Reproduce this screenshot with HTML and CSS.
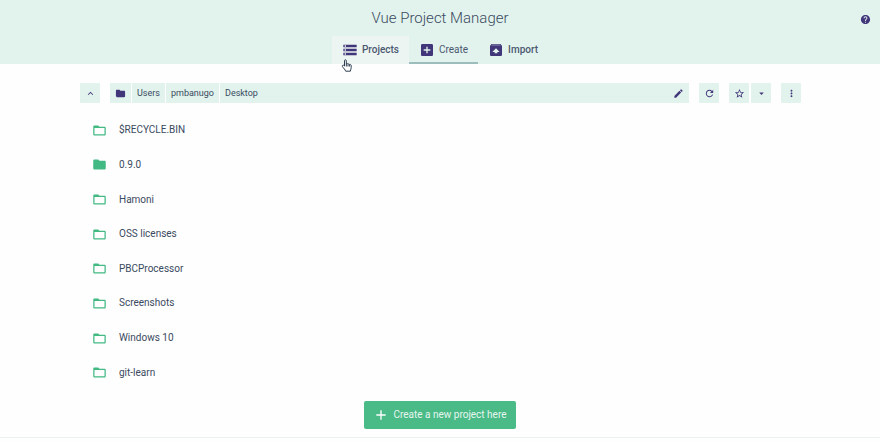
FILE: index.html
```html
<!DOCTYPE html>
<html lang="en">
<head>
<meta charset="utf-8">
<title>Vue Project Manager</title>
<link rel="stylesheet" href="styles.css">
</head>
<body>
<svg class="sprite" aria-hidden="true">
  <symbol id="folder" viewBox="0 0 24 24"><path d="M10 4H4c-1.1 0-1.99.9-1.99 2L2 18c0 1.1.9 2 2 2h16c1.1 0 2-.9 2-2V8c0-1.1-.9-2-2-2h-8l-2-2z"/></symbol>
  <symbol id="folder-open" viewBox="0 0 24 24"><path d="M20 6h-8l-2-2H4c-1.1 0-1.99.9-1.99 2L2 18c0 1.1.9 2 2 2h16c1.1 0 2-.9 2-2V8c0-1.1-.9-2-2-2zm0 12H4V8h16v10z"/></symbol>
</svg>
<header class="header">
  <h1 class="title">Vue Project Manager</h1>
  <button class="help" aria-label="Help"><svg class="icon small" viewBox="0 0 24 24"><path d="M12 2C6.480 2 2 6.480 2 12s4.480 10 10 10 10-4.480 10-10S17.520 2 12 2zm1 17h-2v-2h2v2zm2.070-7.750l-.9.920C13.450 12.900 13 13.500 13 15h-2v-.5c0-1.100.450-2.100 1.170-2.830l1.240-1.260c.370-.360.590-.860.590-1.410 0-1.100-.9-2-2-2s-2 .9-2 2H8c0-2.210 1.790-4 4-4s4 1.790 4 4c0 .880-.360 1.680-.930 2.250z"/></svg></button>
  <nav class="tabs">
    <a class="tab hovered" href="#projects"><svg class="icon" viewBox="0 0 24 24"><path d="M2 20h20v-4H2v4zm2-3h2v2H4v-2zM2 4v4h20V4H2zm4 3H4V5h2v2zm-4 7h20v-4H2v4zm2-3h2v2H4v-2z"/></svg>Projects</a>
    <a class="tab active" href="#create"><svg class="icon" viewBox="0 0 24 24"><path d="M19 3H5c-1.110 0-2 .9-2 2v14c0 1.100.890 2 2 2h14c1.100 0 2-.9 2-2V5c0-1.100-.9-2-2-2zm-2 10h-4v4h-2v-4H7v-2h4V7h2v4h4v2z"/></svg>Create</a>
    <a class="tab" href="#import"><svg class="icon" viewBox="0 0 24 24"><path d="M20.550 5.220l-1.390-1.680C18.880 3.210 18.470 3 18 3H6c-.470 0-.880.210-1.150.550L3.460 5.220C3.170 5.570 3 6.010 3 6.500V19c0 1.100.890 2 2 2h14c1.100 0 2-.9 2-2V6.500c0-.490-.170-.930-.450-1.280zM12 9.500l5.500 5.500H14v2h-4v-2H6.500L12 9.500zM5.120 5l.820-1h12l.930 1H5.120z"/></svg>Import</a>
    <svg class="pointer" viewBox="0 0 12 13" aria-hidden="true"><path d="M3.500 7V1.700c0-1.300 1.800-1.300 1.800 0V5c.4-.7 1.500-.6 1.700.2.500-.5 1.400-.3 1.600.4.700-.4 1.600 0 1.600.9v2.200c0 1.200-.7 1.900-.9 3.500H4.700C4.300 10.700 2.500 9.300 1.400 7.500.9 6.500 2 5.700 2.700 6.300zM5.300 5v2.500M7 5.300v2.200M8.600 5.700v1.800"/></svg>
  </nav>
</header>
<main class="content">
  <div class="toolbar">
    <button class="tool" aria-label="Open parent folder"><svg class="icon small" viewBox="0 0 24 24"><path d="M7.410 15.410L12 10.830l4.590 4.580L18 14l-6-6-6 6z"/></svg></button>
    <div class="path">
      <button class="crumb" aria-label="Root folder"><svg class="icon small"><use href="#folder"/></svg></button>
      <button class="crumb">Users</button>
      <button class="crumb">pmbanugo</button>
      <button class="crumb last">Desktop</button>
      <button class="crumb edit" aria-label="Edit path"><svg class="icon small" viewBox="0 0 24 24"><path d="M3 17.250V21h3.750L17.810 9.940l-3.750-3.750L3 17.250zM20.710 7.040c.390-.390.390-1.020 0-1.410l-2.340-2.340c-.390-.390-1.020-.390-1.410 0l-1.830 1.830 3.750 3.750 1.830-1.830z"/></svg></button>
    </div>
    <button class="tool" aria-label="Refresh"><svg class="icon small" viewBox="0 0 24 24"><path d="M17.650 6.350C16.200 4.900 14.210 4 12 4c-4.420 0-7.990 3.580-7.990 8s3.570 8 7.990 8c3.730 0 6.840-2.550 7.730-6h-2.080c-.820 2.330-3.040 4-5.650 4-3.310 0-6-2.690-6-6s2.690-6 6-6c1.660 0 3.140.690 4.220 1.780L13 11h7V4l-2.350 2.350z"/></svg></button>
    <div class="favorites">
      <button class="tool" aria-label="Toggle favorite"><svg class="icon small" viewBox="0 0 24 24"><path d="M22 9.240l-7.190-.620L12 2 9.190 8.630 2 9.240l5.460 4.730L5.820 21 12 17.270 18.180 21l-1.630-7.030L22 9.240zM12 15.400l-3.760 2.270 1-4.280-3.320-2.880 4.380-.380L12 6.100l1.710 4.040 4.380.380-3.320 2.880 1 4.280L12 15.400z"/></svg></button>
      <button class="tool" aria-label="Favorite folders"><svg class="icon small" viewBox="0 0 24 24"><path d="M7 10l5 5 5-5z"/></svg></button>
    </div>
    <button class="tool" aria-label="More options"><svg class="icon small" viewBox="0 0 24 24"><path d="M12 8c1.100 0 2-.9 2-2s-.9-2-2-2-2 .9-2 2 .9 2 2 2zm0 2c-1.100 0-2 .9-2 2s.9 2 2 2 2-.9 2-2-.9-2-2-2zm0 6c-1.100 0-2 .9-2 2s.9 2 2 2 2-.9 2-2-.9-2-2-2z"/></svg></button>
  </div>
  <ul class="folders">
    <li class="folder"><svg class="icon"><use href="#folder-open"/></svg>$RECYCLE.BIN</li>
    <li class="folder"><svg class="icon"><use href="#folder"/></svg>0.9.0</li>
    <li class="folder"><svg class="icon"><use href="#folder-open"/></svg>Hamoni</li>
    <li class="folder"><svg class="icon"><use href="#folder-open"/></svg>OSS licenses</li>
    <li class="folder"><svg class="icon"><use href="#folder-open"/></svg>PBCProcessor</li>
    <li class="folder"><svg class="icon"><use href="#folder-open"/></svg>Screenshots</li>
    <li class="folder"><svg class="icon"><use href="#folder-open"/></svg>Windows 10</li>
    <li class="folder"><svg class="icon"><use href="#folder-open"/></svg>git-learn</li>
  </ul>
</main>
<div class="actions">
  <button class="create"><svg class="icon" viewBox="0 0 24 24"><path d="M19 13h-6v6h-2v-6H5v-2h6V5h2v6h6v2z"/></svg>Create a new project here</button>
</div>
<footer class="status"></footer>
</body>
</html>
```
FILE: styles.css
```css
* {
  box-sizing: border-box;
}

body {
  margin: 0;
  min-height: 100vh;
  display: flex;
  flex-direction: column;
  background: #fefefe;
  color: #3a4a60;
  font: 10px/16px Roboto, sans-serif;
}

button {
  margin: 0;
  padding: 0;
  border: 0;
  background: none;
  color: inherit;
  font: inherit;
  cursor: pointer;
}

.sprite {
  position: absolute;
  width: 0;
  height: 0;
}

.icon {
  flex: none;
  width: 16px;
  height: 16px;
  fill: #42367a;
}

.small {
  width: 11px;
  height: 11px;
}

.header {
  position: relative;
  display: flex;
  flex-direction: column;
  align-items: center;
  background: #e2f3ed;
}

.title {
  margin: 0;
  height: 36px;
  font-size: 15px;
  font-weight: 300;
  line-height: 36px;
}

.help {
  position: absolute;
  top: 14px;
  right: 9px;
  display: flex;
}

.tabs {
  position: relative;
  display: flex;
}

.tab {
  display: flex;
  align-items: center;
  gap: 4px;
  height: 28px;
  padding: 0 10px;
  color: #4b5870;
  font-weight: 500;
  text-decoration: none;
}

.hovered {
  background: #edf5f2;
}

.active {
  box-shadow: inset 0 -2px #9dbdbd;
  font-weight: 400;
}

.pointer {
  position: absolute;
  top: 23px;
  left: 9px;
  width: 12px;
  height: 13px;
  fill: #fff;
  stroke: #2c3e50;
}

.content {
  flex: 1;
  display: flex;
  flex-direction: column;
  padding: 0 79px 0 80px;
}

.toolbar {
  display: flex;
  gap: 10px;
  height: 20px;
  margin: 19px 0 10px;
  font-size: 9px;
}

.tool {
  display: flex;
  align-items: center;
  justify-content: center;
  width: 20px;
  border-radius: 1px;
  background: #e2f3ed;
}

.path {
  flex: 1;
  display: flex;
}

.crumb {
  display: flex;
  align-items: center;
  padding: 0 5px;
  border-right: 1px solid #fefefe;
  background: #e2f3ed;
}

.last {
  flex: 1;
  border-right: 0;
}

.edit {
  border-right: 0;
}

.favorites {
  display: flex;
  gap: 2px;
}

.folders {
  flex: 1;
  display: grid;
  grid-auto-rows: 1fr;
  margin: 0;
  padding: 0 12px;
  list-style: none;
}

.folder {
  display: flex;
  align-items: center;
  gap: 12px;
}

.folder .icon {
  width: 15px;
  height: 15px;
  fill: #42b983;
}

.actions {
  display: flex;
  justify-content: center;
  padding: 11px 0 8px;
}

.create {
  display: flex;
  align-items: center;
  gap: 4px;
  height: 28px;
  padding: 0 9px;
  border-radius: 2px;
  background: #4aba87;
  color: #e6f6ef;
}

.create .icon {
  fill: #fff;
}

.status {
  height: 5px;
  border-top: 1px solid #ebf2f0;
}
```
